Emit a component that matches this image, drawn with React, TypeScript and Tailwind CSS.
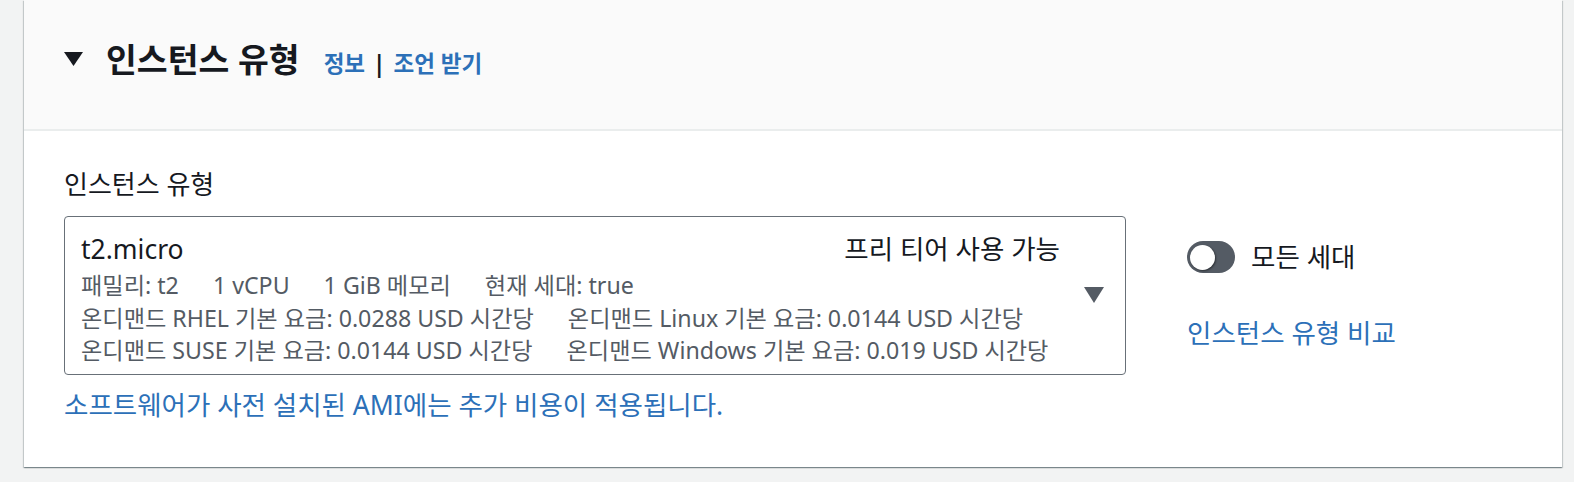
import { useState } from 'react';

const font = { fontFamily: '"Noto Sans", "Noto Sans CJK KR", sans-serif' };

export default function App() {
  const [allGen, setAllGen] = useState(false);

  return (
    <div className="min-h-screen bg-[#f2f3f3] pb-[15px]" style={font}>
      <div className="ml-[24px] mr-[12px] bg-white shadow-[0_1px_1px_0_rgba(0,28,36,0.3),1px_1px_1px_0_rgba(0,28,36,0.15),-1px_1px_1px_0_rgba(0,28,36,0.15)]">
        {/* Header */}
        <div className="h-[131px] bg-[#fafafa] border-b-2 border-[#eaeded] flex items-center pl-[40px] pb-[12px]">
          <svg width="19" height="14" viewBox="0 0 19 14" className="shrink-0">
            <path d="M0 0 H19 L9.5 14 Z" fill="#16191f" />
          </svg>
          <div className="flex items-baseline ml-[23px]">
            <h2 className="text-[33.5px] font-bold text-[#16191f] leading-[42px]">인스턴스 유형</h2>
            <div className="ml-[24px] text-[22.5px] font-bold leading-[30px] flex items-baseline">
              <a href="#" className="text-[#2c70b8]">정보</a>
              <span className="mx-[8px] text-[#16191f]">|</span>
              <a href="#" className="text-[#2c70b8]">조언 받기</a>
            </div>
          </div>
        </div>

        {/* Body */}
        <div className="pl-[40px] pr-[40px] pt-[36px] pb-[45px]">
          <div className="text-[26px] leading-[34px] text-[#16191f]">인스턴스 유형</div>
          <div className="flex items-start mt-[15px]">
            <div className="w-[1062px] shrink-0 border border-[#687078] rounded-[4px] flex">
              <div className="flex-1 pl-[16px] pt-[13px] pb-[7px]">
                <div className="flex justify-between items-center leading-[39px] text-[26.5px] text-[#16191f]">
                  <span>t2.micro</span>
                  <span>프리 티어 사용 가능</span>
                </div>
                <div className="text-[23.2px] leading-[32.5px] text-[#545b64]">
                  <div className="flex gap-[34px]">
                    <span>패밀리: t2</span>
                    <span>1 vCPU</span>
                    <span>1 GiB 메모리</span>
                    <span>현재 세대: true</span>
                  </div>
                  <div className="flex gap-[34px]">
                    <span>온디맨드 RHEL 기본 요금: 0.0288 USD 시간당</span>
                    <span>온디맨드 Linux 기본 요금: 0.0144 USD 시간당</span>
                  </div>
                  <div className="flex gap-[34px]">
                    <span>온디맨드 SUSE 기본 요금: 0.0144 USD 시간당</span>
                    <span>온디맨드 Windows 기본 요금: 0.019 USD 시간당</span>
                  </div>
                </div>
              </div>
              <div className="flex items-center pl-[24px] pr-[21px]">
                <svg width="20" height="16" viewBox="0 0 20 16">
                  <path d="M0 0 H20 L10 16 Z" fill="#545b64" />
                </svg>
              </div>
            </div>

            <div className="ml-[61px] pt-[24px]">
              <button
                onClick={() => setAllGen(!allGen)}
                className="flex items-center gap-[16px] h-[34px]"
              >
                <span
                  className={`w-[48px] h-[32px] rounded-full flex items-center px-[3px] ${
                    allGen ? 'bg-[#0073bb] justify-end' : 'bg-[#545b64] justify-start'
                  }`}
                >
                  <span className="w-[25px] h-[25px] rounded-full bg-white shadow-[1px_1px_2px_rgba(0,0,0,0.45)]" />
                </span>
                <span className="text-[26.5px] leading-[34px] text-[#16191f]">모든 세대</span>
              </button>
              <a href="#" className="block mt-[42px] text-[26.5px] leading-[34px] text-[#2c70b8]">
                인스턴스 유형 비교
              </a>
            </div>
          </div>
          <a href="#" className="block mt-[13px] text-[26.5px] leading-[34px] text-[#2c70b8]">
            소프트웨어가 사전 설치된 AMI에는 추가 비용이 적용됩니다.
          </a>
        </div>
      </div>
    </div>
  );
}
